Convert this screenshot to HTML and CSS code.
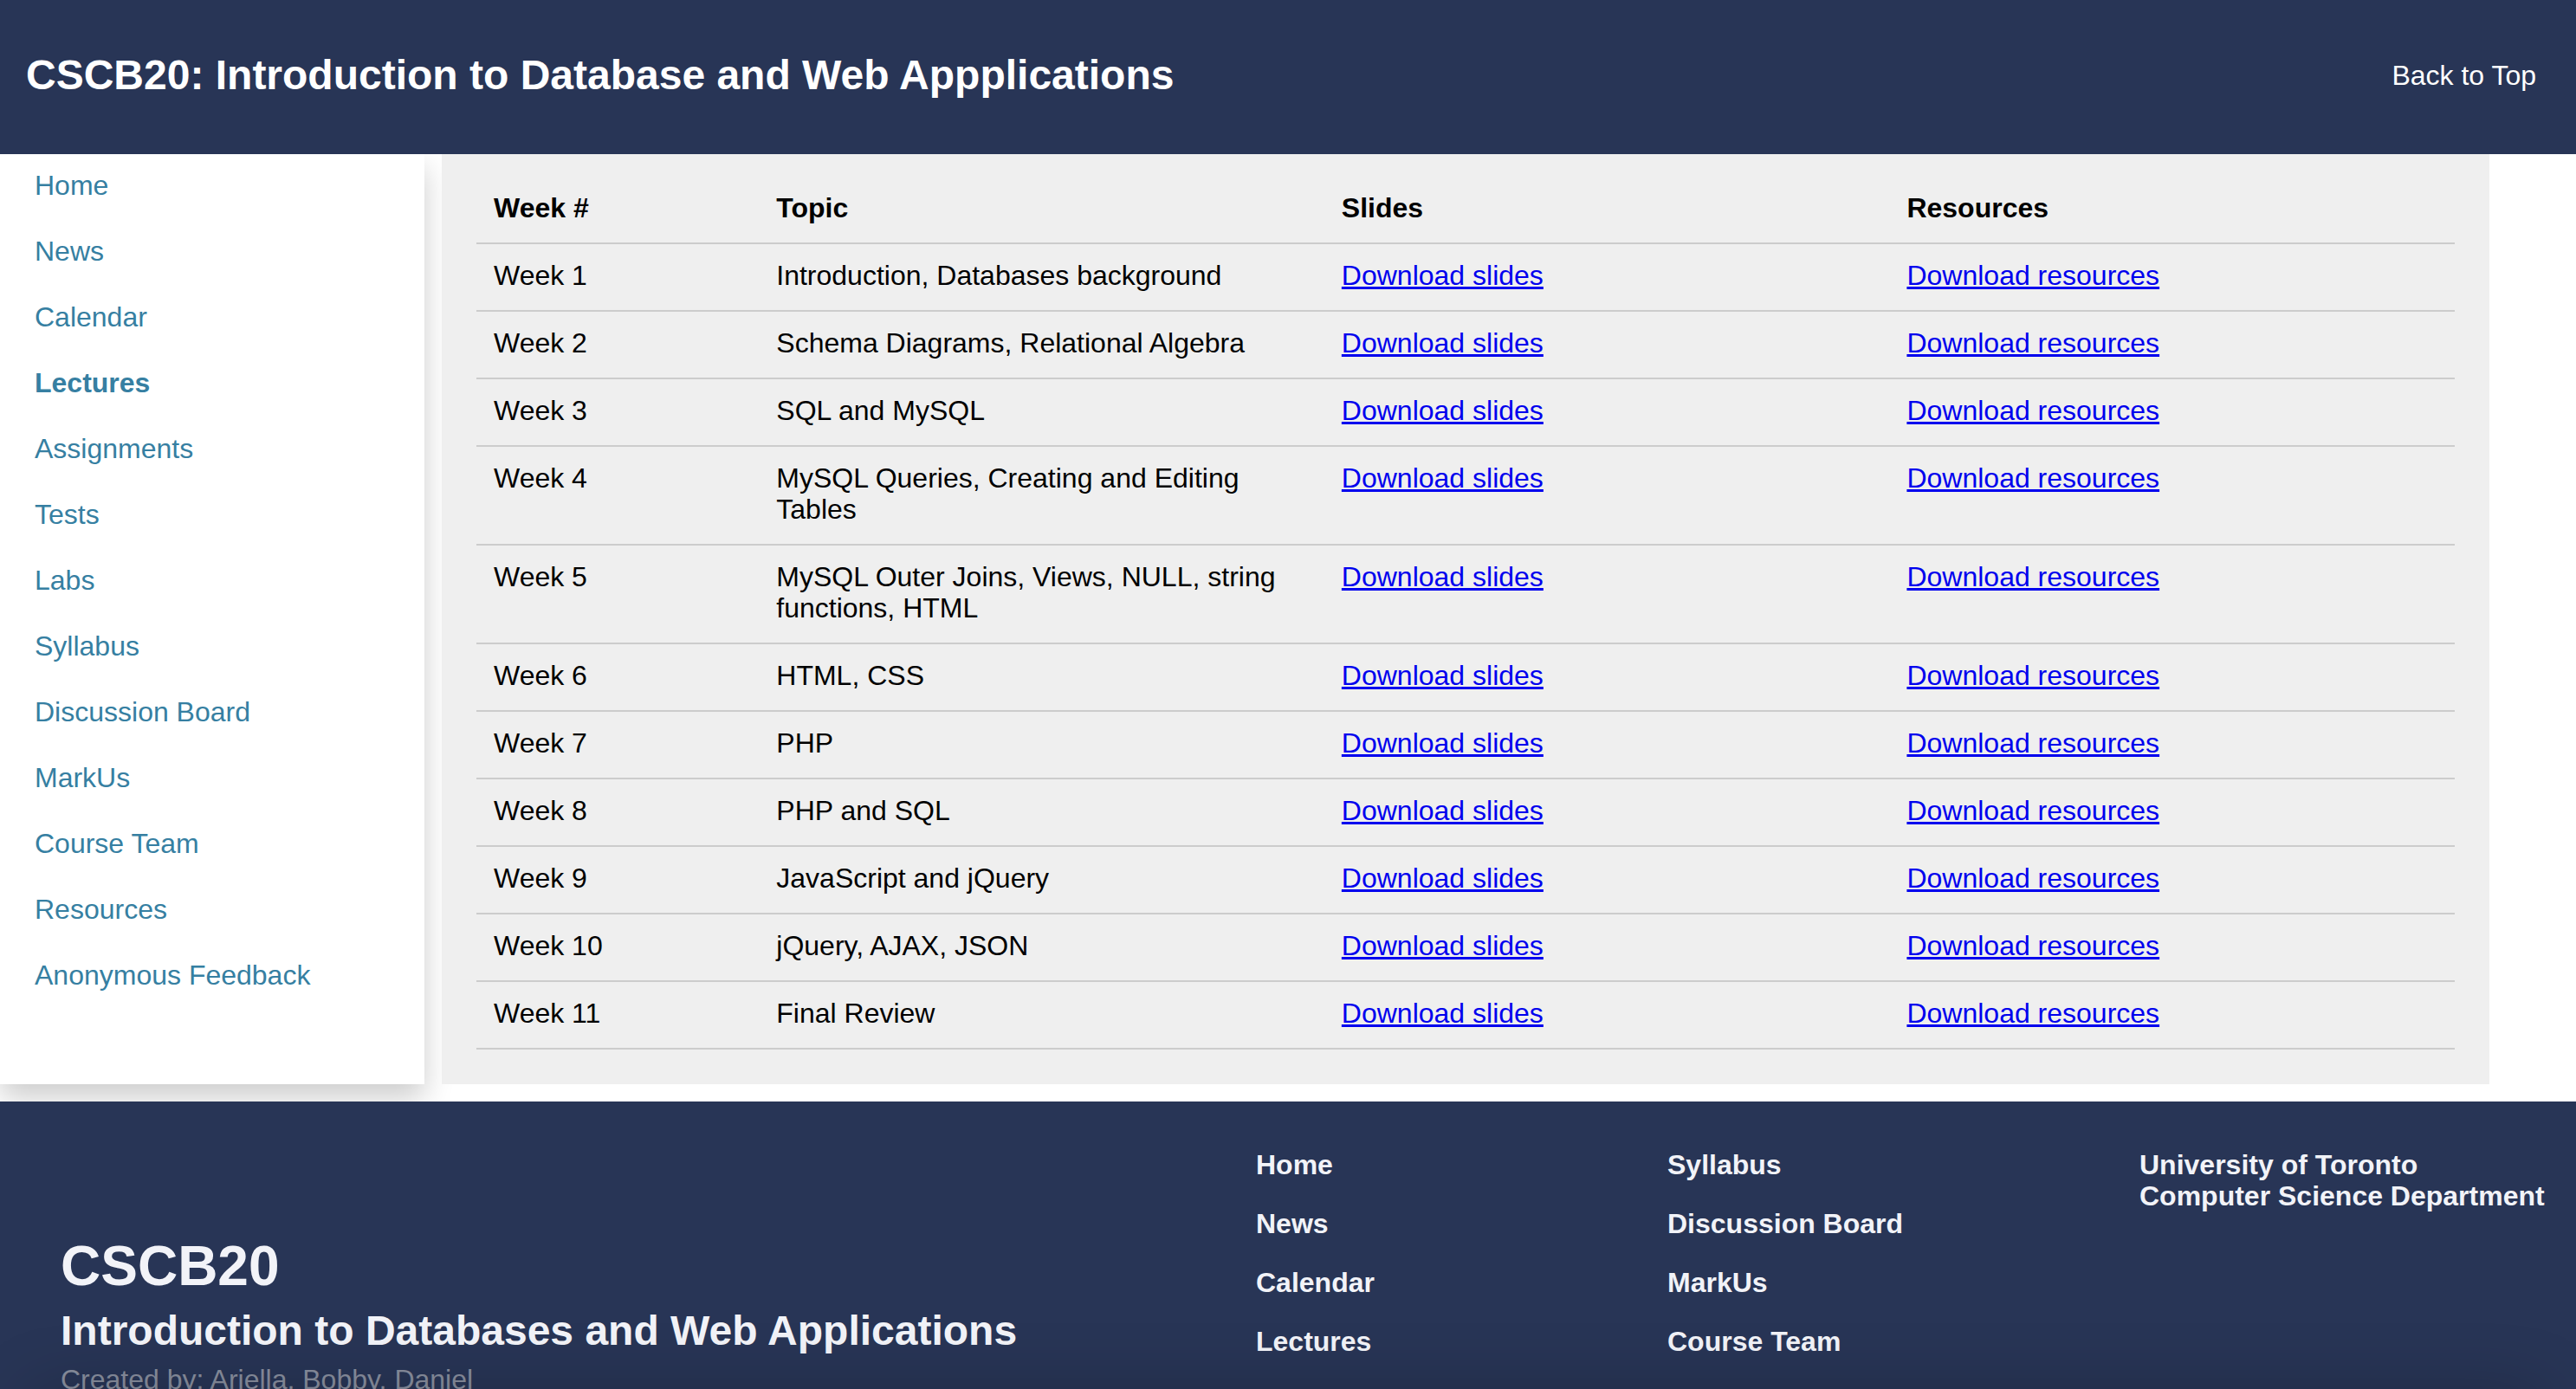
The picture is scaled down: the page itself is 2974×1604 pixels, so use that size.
FILE: index.html
```html
<!DOCTYPE html>
<html lang="en">
<head>
  <meta charset="utf-8">
  <meta name="viewport" content="width=device-width, initial-scale=1">
  <title>CSCB20 Lectures</title>
  <link rel="stylesheet" href="styles.css">
</head>
<body>
  <header class="site-header" id="top">
    <h1 class="site-title">CSCB20: Introduction to Database and Web Appplications</h1>
    <a class="back-link" href="#top">Back to Top</a>
  </header>

  <div class="layout">
    <nav class="sidebar">
      <a href="#">Home</a>
      <a href="#">News</a>
      <a href="#">Calendar</a>
      <a class="active" href="#">Lectures</a>
      <a href="#">Assignments</a>
      <a href="#">Tests</a>
      <a href="#">Labs</a>
      <a href="#">Syllabus</a>
      <a href="#">Discussion Board</a>
      <a href="#">MarkUs</a>
      <a href="#">Course Team</a>
      <a href="#">Resources</a>
      <a href="#">Anonymous Feedback</a>
    </nav>

    <main class="content">
      <table class="lectures">
        <thead>
          <tr><th class="col-week" scope="col">Week #</th><th scope="col">Topic</th><th scope="col">Slides</th><th scope="col">Resources</th></tr>
        </thead>
        <tbody>
          <tr><td>Week 1</td><td>Introduction, Databases background</td><td><a href="#">Download slides</a></td><td><a href="#">Download resources</a></td></tr>
          <tr><td>Week 2</td><td>Schema Diagrams, Relational Algebra</td><td><a href="#">Download slides</a></td><td><a href="#">Download resources</a></td></tr>
          <tr><td>Week 3</td><td>SQL and MySQL</td><td><a href="#">Download slides</a></td><td><a href="#">Download resources</a></td></tr>
          <tr><td>Week 4</td><td>MySQL Queries, Creating and Editing Tables</td><td><a href="#">Download slides</a></td><td><a href="#">Download resources</a></td></tr>
          <tr><td>Week 5</td><td>MySQL Outer Joins, Views, NULL, string functions, HTML</td><td><a href="#">Download slides</a></td><td><a href="#">Download resources</a></td></tr>
          <tr><td>Week 6</td><td>HTML, CSS</td><td><a href="#">Download slides</a></td><td><a href="#">Download resources</a></td></tr>
          <tr><td>Week 7</td><td>PHP</td><td><a href="#">Download slides</a></td><td><a href="#">Download resources</a></td></tr>
          <tr><td>Week 8</td><td>PHP and SQL</td><td><a href="#">Download slides</a></td><td><a href="#">Download resources</a></td></tr>
          <tr><td>Week 9</td><td>JavaScript and jQuery</td><td><a href="#">Download slides</a></td><td><a href="#">Download resources</a></td></tr>
          <tr><td>Week 10</td><td>jQuery, AJAX, JSON</td><td><a href="#">Download slides</a></td><td><a href="#">Download resources</a></td></tr>
          <tr><td>Week 11</td><td>Final Review</td><td><a href="#">Download slides</a></td><td><a href="#">Download resources</a></td></tr>
        </tbody>
      </table>
    </main>
  </div>

  <footer class="site-footer">
    <div class="about">
      <h2 class="about-code">CSCB20</h2>
      <h3 class="about-name">Introduction to Databases and Web Applications</h3>
      <p class="about-authors">Created by: Ariella, Bobby, Daniel</p>
    </div>
    <nav class="footer-links">
      <a href="#">Home</a>
      <a href="#">News</a>
      <a href="#">Calendar</a>
      <a href="#">Lectures</a>
    </nav>
    <nav class="footer-links">
      <a href="#">Syllabus</a>
      <a href="#">Discussion Board</a>
      <a href="#">MarkUs</a>
      <a href="#">Course Team</a>
    </nav>
    <p class="department">University of Toronto<br>Computer Science Department</p>
  </footer>
</body>
</html>
```
FILE: styles.css
```css
* {
  box-sizing: border-box;
}

html {
  scrollbar-width: none;
}

body {
  margin: 0;
  background: #fff;
  color: #000;
  font-family: Arial, "Liberation Sans", sans-serif;
  font-size: 32px;
  line-height: 36px;
}

h1,
h2,
h3,
p {
  margin: 0;
}

.site-header {
  position: relative;
  z-index: 2;
  display: flex;
  align-items: center;
  justify-content: space-between;
  padding: 59px 46px 63px 30px;
  background: #283556;
  color: #fff;
}

.site-title {
  font-size: 48px;
  line-height: 56px;
}

.back-link {
  color: #fff;
  text-decoration: none;
}

.layout {
  display: flex;
  gap: 20px;
  padding: 0 100px 20px 0;
}

.sidebar {
  display: flex;
  flex: 0 0 490px;
  flex-direction: column;
  gap: 40px;
  padding: 18px 40px;
  background: #fff;
  box-shadow: 0 16px 32px rgba(0, 0, 0, 0.2);
}

.sidebar a {
  color: #367fa2;
  text-decoration: none;
}

.sidebar .active {
  font-weight: bold;
}

.content {
  position: relative;
  flex: 1;
  padding: 26px 40px 40px;
  background: #efefef;
}

.lectures {
  width: 100%;
  border-spacing: 0;
  table-layout: fixed;
}

.lectures th,
.lectures td {
  padding: 18px 20px 22px;
  border-bottom: 2px solid #ccc;
  text-align: left;
  vertical-align: top;
}

.lectures .col-week {
  width: calc(100% / 7);
}

.lectures a {
  color: #00e;
}

.site-footer {
  position: relative;
  overflow: hidden;
  display: grid;
  grid-template-columns: 276fr 95fr 109fr 504px;
  align-items: start;
  padding: 55px 0 0 70px;
  background: #283556;
  color: #f2f3f8;
}

.site-footer::after {
  content: "";
  position: absolute;
  top: 100%;
  right: 40px;
  left: 40px;
  height: 80px;
  box-shadow: 0 0 80px rgba(0, 0, 0, 0.25);
}

.about {
  display: flex;
  flex-direction: column;
  gap: 10px;
  padding-top: 98px;
}

.about-code {
  font-size: 64px;
  line-height: 74px;
}

.about-name {
  font-size: 48px;
  line-height: 56px;
}

.about-authors {
  color: #898f9f;
}

.footer-links {
  display: flex;
  flex-direction: column;
  gap: 32px;
}

.footer-links a {
  color: inherit;
  font-weight: bold;
  text-decoration: none;
}

.department {
  font-weight: bold;
}
```
